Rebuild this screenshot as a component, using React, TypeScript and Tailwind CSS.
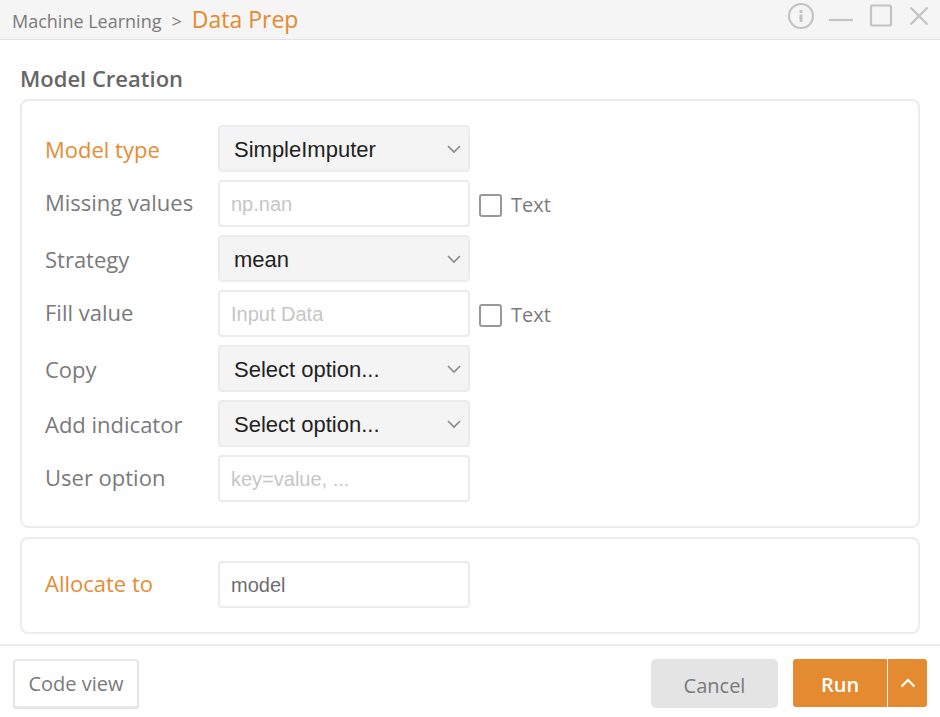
import { useState } from "react";
import type { ReactNode } from "react";

const fieldBox = "h-[47px] w-[252px] shrink-0 rounded-[4px] border-2 border-[#ececec]";

function Row({ id, label, accent = false, select = false, children }: { id: string; label: string; accent?: boolean; select?: boolean; children: ReactNode }) {
  return (
    <div className="flex items-center">
      <label
        htmlFor={id}
        className={`w-[173px] shrink-0 text-[22px] leading-7 ${select ? "" : "pb-1"} ${accent ? "text-[#e68c32]" : "text-[#7a7a7a]"}`}
      >
        {label}
      </label>
      {children}
    </div>
  );
}

function SelectField({ id, options }: { id: string; options: string[] }) {
  return (
    <div className="grid items-center">
      <select
        id={id}
        className={`${fieldBox} col-start-1 row-start-1 appearance-none bg-[#f4f4f4] pt-px pl-[14px] pr-9 font-['Liberation_Sans',Arial,sans-serif] text-[22px] text-[#222222]`}
      >
        {options.map((option) => (
          <option key={option}>{option}</option>
        ))}
      </select>
      <svg
        className="pointer-events-none col-start-1 row-start-1 mr-2 h-4 w-4 justify-self-end"
        viewBox="0 0 16 16"
        fill="none"
        stroke="#8c8c8c"
        strokeWidth="1.7"
        aria-hidden="true"
      >
        <path d="M2 5l6 6 6-6" />
      </svg>
    </div>
  );
}

function TextField({ id, placeholder, value }: { id: string; placeholder?: string; value?: string }) {
  return (
    <input
      id={id}
      type="text"
      placeholder={placeholder}
      defaultValue={value}
      className={`${fieldBox} bg-white px-[11px] pt-px font-['Liberation_Sans',Arial,sans-serif] text-[20px] text-[#6e6e6e] placeholder:text-[#c6c6c6]`}
    />
  );
}

function TextToggle({ id }: { id: string }) {
  const [checked, setChecked] = useState(false);
  return (
    <label htmlFor={id} className="ml-[9px] flex items-center gap-[9px] pt-[3px] text-[20px] leading-7 text-[#7a7a7a]">
      <input
        id={id}
        type="checkbox"
        checked={checked}
        onChange={(event) => setChecked(event.target.checked)}
        className="h-[23px] w-[23px] appearance-none rounded-[3px] border-2 border-[#999999] bg-white checked:bg-[#e68c32]"
      />
      Text
    </label>
  );
}

export default function App() {
  return (
    <main className="flex min-h-screen flex-col bg-white font-['Open_Sans','Noto_Sans',sans-serif] text-[#7a7a7a]">
      <header className="flex h-10 items-center justify-between border-b border-[#e2e2e2] bg-[#f5f5f5] pl-3 pr-[10px]">
        <nav aria-label="Breadcrumb" className="flex items-baseline gap-[10px] text-[18px] leading-7">
          <span>Machine Learning</span>
          <span>&gt;</span>
          <span className="text-[23px] text-[#e58a2e]">Data Prep</span>
        </nav>
        <div className="flex gap-[13px] pb-[7px]">
          <button type="button" aria-label="Information">
            <svg width="28" height="28" viewBox="0 0 28 28" fill="none" stroke="#c3c3c3" strokeWidth="2.2">
              <circle cx="14" cy="14" r="12" />
              <path d="M14 12.500v7.500M14 8v3" strokeWidth="3" />
            </svg>
          </button>
          <button type="button" aria-label="Minimize">
            <svg width="26" height="28" viewBox="0 0 26 28" fill="none" stroke="#c3c3c3" strokeWidth="2.2">
              <path d="M1 18h24" />
            </svg>
          </button>
          <button type="button" aria-label="Maximize">
            <svg width="28" height="28" viewBox="0 0 28 28" fill="none" stroke="#c3c3c3" strokeWidth="2.2">
              <rect x="4" y="3.500" width="20" height="20" rx="1.500" />
            </svg>
          </button>
          <button type="button" aria-label="Close">
            <svg width="22" height="28" viewBox="0 0 22 28" fill="none" stroke="#c3c3c3" strokeWidth="2.2">
              <path d="M2.500 5.500l17 17M19.500 5.500l-17 17" />
            </svg>
          </button>
        </div>
      </header>

      <form className="flex flex-1 flex-col" onSubmit={(event) => event.preventDefault()}>
        <div className="flex-1 px-5 pt-6 pb-[10px]">
          <h1 className="mb-[7px] text-[22px] leading-7 font-semibold text-[#666666]">Model Creation</h1>
          <section className="flex flex-col gap-2 rounded-lg border-2 border-[#ececec] px-[23px] py-6">
            <Row id="model-type" label="Model type" accent select>
              <SelectField id="model-type" options={["SimpleImputer"]} />
            </Row>
            <Row id="missing-values" label="Missing values">
              <TextField id="missing-values" placeholder="np.nan" />
              <TextToggle id="missing-values-text" />
            </Row>
            <Row id="strategy" label="Strategy" select>
              <SelectField id="strategy" options={["mean", "median", "most_frequent", "constant"]} />
            </Row>
            <Row id="fill-value" label="Fill value">
              <TextField id="fill-value" placeholder="Input Data" />
              <TextToggle id="fill-value-text" />
            </Row>
            <Row id="copy" label="Copy" select>
              <SelectField id="copy" options={["Select option...", "True", "False"]} />
            </Row>
            <Row id="add-indicator" label="Add indicator" select>
              <SelectField id="add-indicator" options={["Select option...", "True", "False"]} />
            </Row>
            <Row id="user-option" label="User option">
              <TextField id="user-option" placeholder="key=value, ..." />
            </Row>
          </section>
          <section className="mt-[9px] rounded-lg border-2 border-[#ececec] px-[23px] pt-[22px] pb-6">
            <Row id="allocate-to" label="Allocate to" accent>
              <TextField id="allocate-to" value="model" />
            </Row>
          </section>
        </div>

        <footer className="flex items-center justify-between border-t-2 border-[#ebebeb] px-[13px] pt-[13px] pb-[9px] text-[20px] leading-7">
          <button type="button" className="h-[49px] w-[126px] rounded-[4px] border-2 border-[#e8e8e8] bg-white shadow-[0_1px_1px_#dddddd]">
            Code view
          </button>
          <div className="flex gap-[15px]">
            <button type="button" className="h-[49px] w-[127px] rounded-[5px] bg-[#e4e4e4] pt-1">
              Cancel
            </button>
            <div className="flex gap-px text-white">
              <button type="submit" className="h-12 w-[94px] rounded-l-[3px] bg-[#e48b32] pt-1 font-semibold">
                Run
              </button>
              <button type="button" aria-label="More run options" className="flex h-12 w-[39px] items-center justify-center rounded-r-[3px] bg-[#e48b32]">
                <svg width="16" height="16" viewBox="0 0 16 16" fill="none" stroke="currentColor" strokeWidth="2.2" aria-hidden="true">
                  <path d="M1.500 11.500L8 5l6.500 6.500" />
                </svg>
              </button>
            </div>
          </div>
        </footer>
      </form>
    </main>
  );
}
